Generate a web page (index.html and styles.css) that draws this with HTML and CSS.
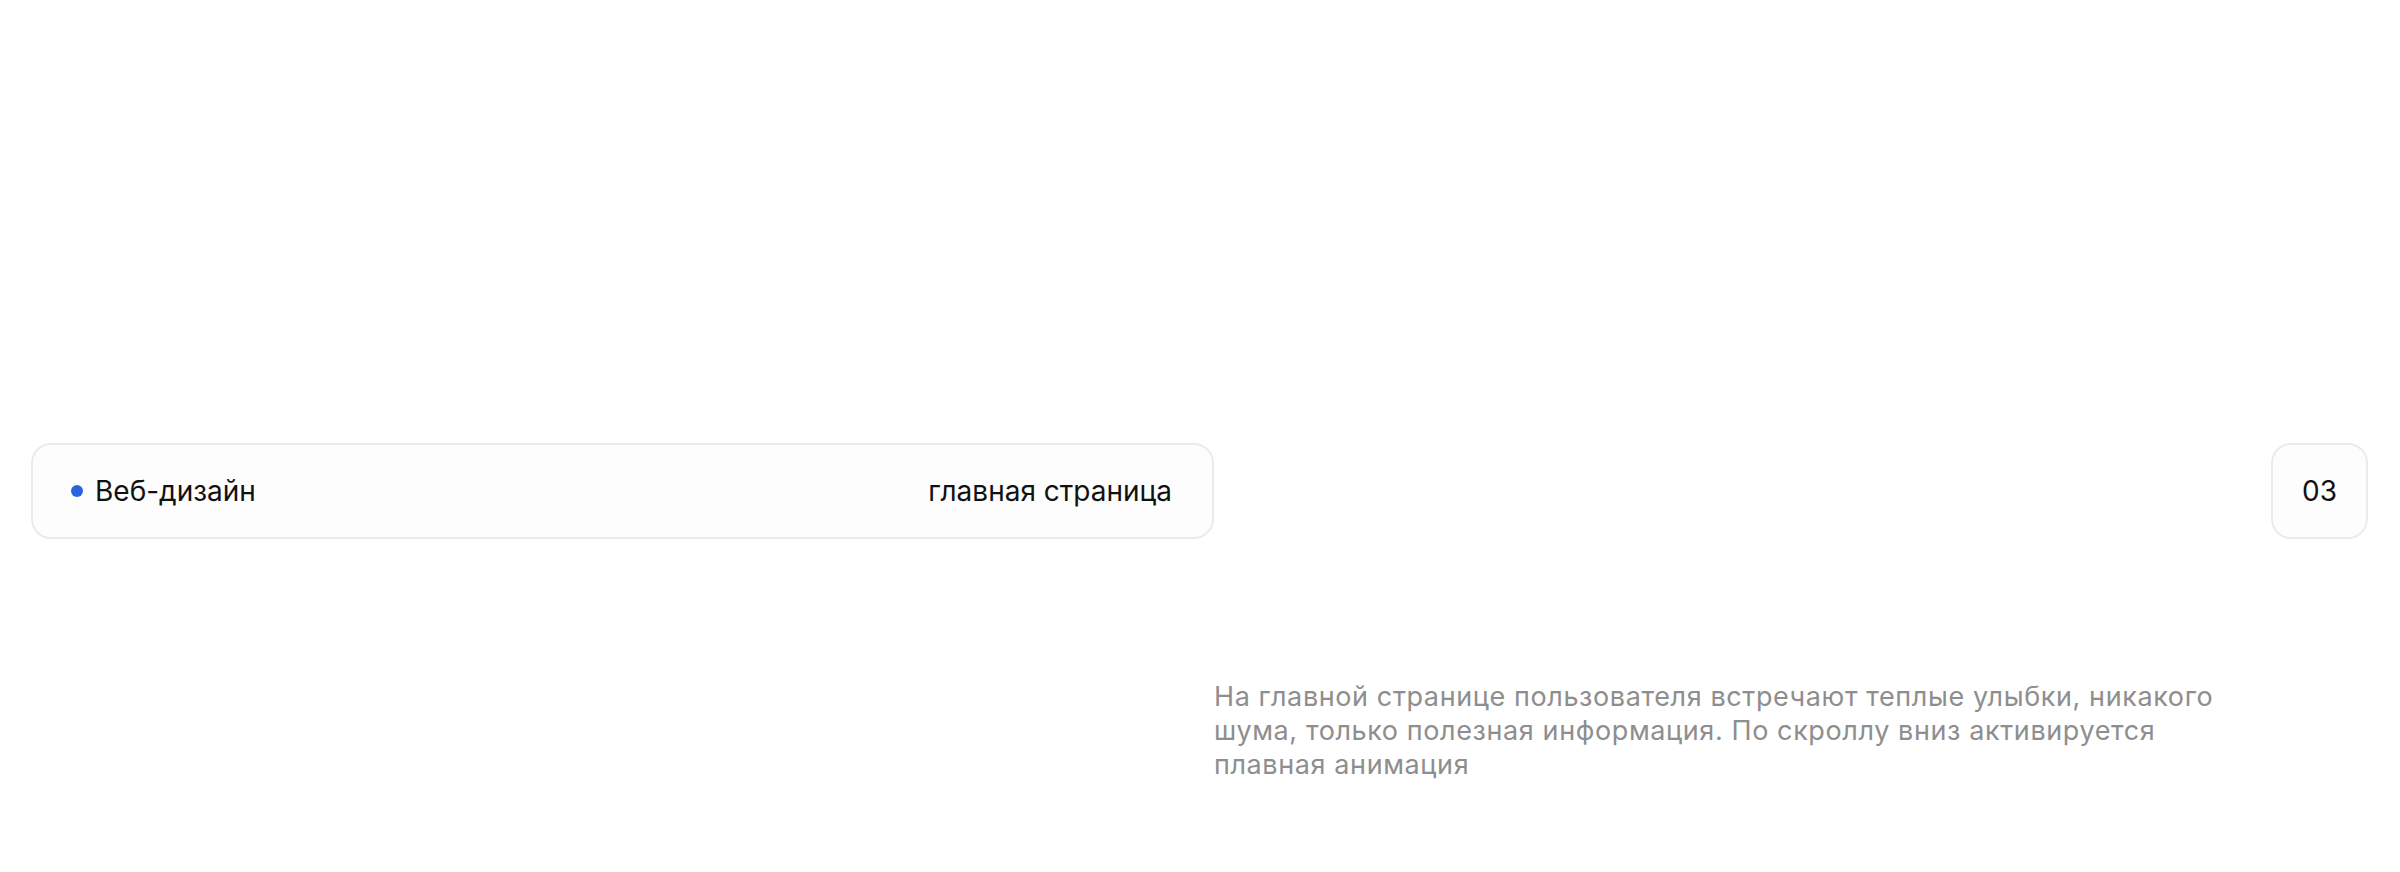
FILE: index.html
```html
<!DOCTYPE html>
<html lang="ru">
  <head>
    <meta charset="UTF-8" />
    <meta name="viewport" content="width=device-width, initial-scale=1.0" />
    <title>Веб-дизайн</title>
    <link rel="stylesheet" href="styles.css">
  </head>
  <body>
    <div class="project">
      <div class="project-bar">
        <div class="tag-card">
          <span class="tag">
            <span class="dot"></span>
            Веб-дизайн
          </span>
          <span class="page-name">главная страница</span>
        </div>
        <div class="num-card">03</div>
      </div>

      <div class="project-text">
        <p class="descr">
          На главной странице пользователя встречают теплые улыбки, никакого
          шума, только полезная информация. По скроллу вниз активируется
          плавная анимация
        </p>
      </div>
    </div>
  </body>
</html>
```

FILE: styles.css
```css
* {
  box-sizing: border-box;
}
body {
  margin: 0;
  background: #fff;
  font-family: Inter, "Noto Sans", sans-serif;
  color: #111;
}
.project {
  padding: 443px 32px 0 31px;
}
.project-bar {
  display: flex;
  justify-content: space-between;
  align-items: center;
}
.tag-card {
  display: flex;
  justify-content: space-between;
  align-items: center;
  width: 1183px;
  height: 96px;
  padding: 0 40px 0 38px;
  background: #fdfdfd;
  border: 2px solid #ebebeb;
  border-radius: 20px;
  font-size: 28px;
}
.tag {
  display: flex;
  align-items: center;
  gap: 12px;
}
.dot {
  width: 12px;
  height: 12px;
  border-radius: 50%;
  background: #2864e0;
}
.num-card {
  display: flex;
  justify-content: center;
  align-items: center;
  width: 97px;
  height: 96px;
  background: #fdfdfd;
  border: 2px solid #ebebeb;
  border-radius: 20px;
  font-size: 28px;
}
.project-text {
  display: grid;
  grid-template-columns: 1183px 1fr;
  margin-top: 141px;
}
.descr {
  grid-column: 2;
  width: 1030px;
  margin: 0;
  font-size: 27px;
  line-height: 34px;
  letter-spacing: 0.6px;
  color: #8e8e8e;
}
```
